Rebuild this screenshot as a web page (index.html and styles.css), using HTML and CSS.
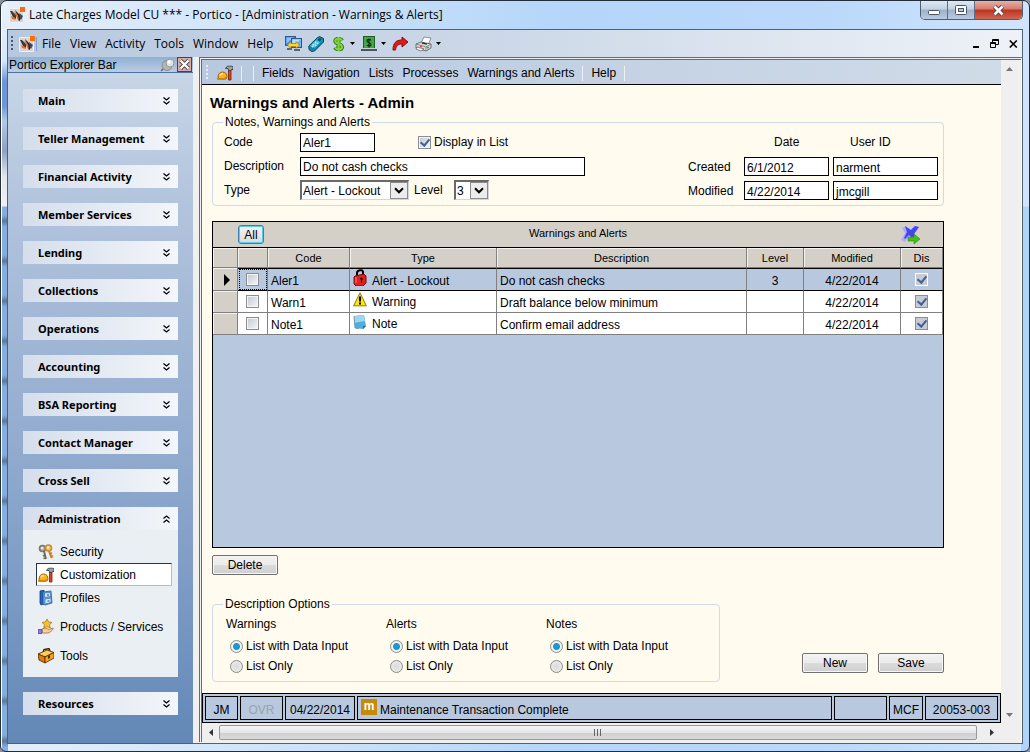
FILE: index.html
```html
<!DOCTYPE html>
<html lang="en">
<head>
    <meta charset="UTF-8">
    <title>Portico - Warnings &amp; Alerts</title>
    <link rel="stylesheet" href="styles.css">
</head>
<body>

<!-- shared icons -->
<svg class="symbols" aria-hidden="true">
    <symbol id="logo" viewBox="0 0 16 16">
        <rect y="1" width="15" height="15" fill="#d6d6d8"/>
        <path d="M.5 1.500h14v14H.500z" fill="none" stroke="#efefef"/>
        <path d="M1 4h2l4 4v4l-3-2z" fill="#3a3a3a"/>
        <path d="M2 9l4 2 1 2-4-1z" fill="#f26a1b"/>
        <path d="M6 3l5 5v6l-2-1-1-5z" fill="#222"/>
        <path d="M5 4l4 4 1 6-3-5z" fill="#f26a1b"/>
        <path d="M10 6l4 3-2 4-1-1z" fill="#3c4a60"/>
        <rect x="11" y="0" width="5" height="5" fill="#ff6a0a"/>
    </symbol>
    <symbol id="hat" viewBox="0 0 16 16">
        <path d="M1 12c0-3 2-5 4.500-5 3 0 4.500 2 4.500 5l-1 2H2z" fill="#fdb515" stroke="#8a4a00" stroke-width=".8"/>
        <path d="M3 10.500c.500-1 1.500-2 3-2" fill="none" stroke="#ffe690" stroke-width="1.400"/>
        <path d="M0 12.500c2 1.500 6 1.500 8-.5l1.500 1c-2 2.500-7 2.500-9.500 1.500z" fill="#d98400"/>
        <path d="M11.500 5H14v10h-2.500z" fill="#e2431e" stroke="#7a1c08" stroke-width=".8"/>
        <path d="M8.500 3.500c1-2 2-2.500 4-2.300h2.500L16 2v3l-1-1-1 1.500h-2.500L11 3.500z" fill="#9da0a5" stroke="#333" stroke-width=".8"/>
    </symbol>
    <symbol id="down" viewBox="0 0 7 8">
        <path d="M.500.500L3.500 3l3-2.500M.500 4.500L3.500 7l3-2.500" fill="none" stroke="#000" stroke-width="1.300"/>
    </symbol>
    <symbol id="up" viewBox="0 0 7 8">
        <path d="M.500 3.500L3.500 1l3 2.500M.500 7.500L3.500 5l3 2.500" fill="none" stroke="#000" stroke-width="1.300"/>
    </symbol>
    <symbol id="caret" viewBox="0 0 5 3">
        <path d="M0 0h5L2.500 3z" fill="#000"/>
    </symbol>
    <symbol id="chevron" viewBox="0 0 10 6">
        <path d="M1 .800l4 4 4-4" fill="none" stroke="#000" stroke-width="2"/>
    </symbol>
</svg>

<div class="window">

    <header class="titlebar">
        <svg class="icon16"><use href="#logo"/></svg>
        <span class="caption">Late Charges Model CU *** - Portico - [Administration - Warnings &amp; Alerts]</span>
        <div class="captionbuttons">
            <button aria-label="Minimize"><svg width="12" height="11"><rect x=".5" y="5.500" width="11" height="4" rx="1" fill="#fff" stroke="#4a5468"/></svg></button>
            <button aria-label="Maximize"><svg width="12" height="11"><rect x=".5" y=".5" width="11" height="9" rx="1" fill="#fff" stroke="#4a5468"/><rect x="3.500" y="3.500" width="5" height="3" fill="#b9c9de" stroke="#4a5468"/></svg></button>
            <button class="close" aria-label="Close"><svg width="13" height="11"><path d="M2.500 1.500l8 8M10.500 1.500l-8 8" stroke="#4d3f4c" stroke-width="4.500"/><path d="M2.500 1.500l8 8M10.500 1.500l-8 8" stroke="#fff" stroke-width="2.600"/></svg></button>
        </div>
    </header>

    <div class="frame">

        <!-- menu bar -->
        <nav class="menubar">
            <span class="grip"></span>
            <svg class="icon16"><use href="#logo"/></svg>
            <span class="logoline"></span>
            <div class="menus">
                <a href="#">File</a>
                <a href="#">View</a>
                <a href="#">Activity</a>
                <a href="#">Tools</a>
                <a href="#">Window</a>
                <a href="#">Help</a>
            </div>
            <div class="tools">
                <button aria-label="Transfer">
                    <svg width="17" height="16">
                        <rect x=".5" y=".5" width="10" height="9" fill="#3f8cf0" stroke="#31558f"/>
                        <path d="M1.500 1.500h7l-7 6z" fill="#8cc4ff"/>
                        <rect x="6.500" y="2.500" width="10" height="9" fill="#6eb2fa" stroke="#31558f"/>
                        <path d="M7.500 3.500h8l-8 6z" fill="#c0e0ff"/>
                        <path d="M2 12h5v2H2zM9 13h6v2H9z" fill="#56648c"/>
                        <path d="M2.500 9L6 5.500v2h5v-2L14.500 9 11 12.500v-2H6v2z" fill="#ffd528" stroke="#9a7a10" stroke-width=".7"/>
                    </svg>
                </button>
                <button aria-label="Calculator">
                    <svg width="17" height="16">
                        <path d="M.800 10L9 2l2.500-1.500 4 2V6L6.500 15l-3 .5-2.500-2z" fill="#1784ab" stroke="#06485f"/>
                        <path d="M2 10l8-8 4.500 2-8 8z" fill="#43bfe0"/>
                        <path d="M9 4l2-2 3 1.500-2 2.300z" fill="#0b556e"/>
                        <path d="M5 8l1 1M7 6l1 1M4 10l1 1M7 10l1-1M9 8l1-1" stroke="#e6fbff" stroke-width="1.500"/>
                    </svg>
                </button>
                <button class="drop currency" aria-label="Currency">
                    <svg width="11" height="16">
                        <path d="M9 4.500C8 2.500 2.500 2 2.300 5c0 3.300 6.700 2.500 6.700 6 0 3-5.500 3-7 .5M5.500 1v14" fill="none" stroke="#2a7a12" stroke-width="4"/>
                        <path d="M9 4.500C8 2.500 2.500 2 2.300 5c0 3.300 6.700 2.500 6.700 6 0 3-5.500 3-7 .5M5.500 1v14" fill="none" stroke="#7ed33c" stroke-width="2.200"/>
                    </svg>
                    <svg class="caret"><use href="#caret"/></svg>
                </button>
                <button class="drop" aria-label="Cash drawer">
                    <svg width="16" height="16">
                        <rect x="2.500" y=".5" width="11" height="12" fill="#48a44a" stroke="#1f5f25"/>
                        <path d="M10 4.500C9 3 6 3 6 5c0 2 4 1.500 4 3.500s-3 2-4 .5M8 2.500v9" fill="none" stroke="#0a2f0c" stroke-width="1.200"/>
                        <path d="M0 13h16v2H0z" fill="#4b5560"/><path d="M1 12.500h14" stroke="#c9d2d8"/>
                    </svg>
                    <svg class="caret"><use href="#caret"/></svg>
                </button>
                <button aria-label="Forward">
                    <svg width="17" height="15">
                        <path d="M1 14C1 7 4 4 10 4V1l6 5-6 5V8C6 8 4 10 3.500 14z" fill="#e01a1a" stroke="#8c0a0a"/>
                    </svg>
                </button>
                <button class="drop" aria-label="Print">
                    <svg width="17" height="16">
                        <path d="M6 7l3-6 7 1-3 7z" fill="#fff" stroke="#777" stroke-width=".8"/>
                        <path d="M1 8l5-2 10 2v4l-5 3-10-3z" fill="#d9d9d9" stroke="#555" stroke-width=".8"/>
                        <path d="M1 8l10 3 5-3M11 11v4" fill="none" stroke="#777" stroke-width=".8"/>
                        <path d="M2 11l7 2-3 2-5-2z" fill="#fff" stroke="#555" stroke-width=".7"/>
                        <path d="M7 7l5 1.200" stroke="#333" stroke-width="1.300"/>
                        <circle cx="13" cy="11.500" r="1" fill="#3aa83a"/>
                        <circle cx="6" cy="10.500" r="1" fill="#d33"/>
                    </svg>
                    <svg class="caret"><use href="#caret"/></svg>
                </button>
            </div>
            <div class="mdibuttons">
                <button aria-label="Minimize form"><svg width="7" height="9"><path d="M0 7h6v2H0z"/></svg></button>
                <button aria-label="Restore form"><svg width="9" height="9"><path d="M2.500 3V.500h6v5H6M2 1.500h7M.500 3.500h5v5h-5zM0 4.500h6" fill="none" stroke="#000"/></svg></button>
                <button aria-label="Close form"><svg width="9" height="8"><path d="M.800.500l7 7M7.800.500l-7 7" stroke="#000" stroke-width="1.600"/></svg></button>
            </div>
        </nav>

        <div class="body">

            <!-- explorer bar -->
            <aside class="explorer">
                <div class="explorerhead">
                    <h2>Portico Explorer Bar</h2>
                    <svg width="15" height="14"><path d="M1 13l4-4" stroke="#666" stroke-width="1.500"/><ellipse cx="7" cy="7.500" rx="5" ry="5" fill="#b4b4b4" stroke="#8c8c8c"/><circle cx="10" cy="5" r="4" fill="#e2e2e2" stroke="#999"/><circle cx="9" cy="4" r="1.500" fill="#fff"/></svg>
                    <button class="paneclose" aria-label="Close explorer bar"><svg width="11" height="11"><path d="M1.500 1.500l8 8M9.500 1.500l-8 8" stroke="#444" stroke-width="4"/><path d="M1.500 1.500l8 8M9.500 1.500l-8 8" stroke="#fff" stroke-width="2.400"/></svg></button>
                </div>
                <div class="groups">
                    <button class="group">Main<svg><use href="#down"/></svg></button>
                    <button class="group">Teller Management<svg><use href="#down"/></svg></button>
                    <button class="group">Financial Activity<svg><use href="#down"/></svg></button>
                    <button class="group">Member Services<svg><use href="#down"/></svg></button>
                    <button class="group">Lending<svg><use href="#down"/></svg></button>
                    <button class="group">Collections<svg><use href="#down"/></svg></button>
                    <button class="group">Operations<svg><use href="#down"/></svg></button>
                    <button class="group">Accounting<svg><use href="#down"/></svg></button>
                    <button class="group">BSA Reporting<svg><use href="#down"/></svg></button>
                    <button class="group">Contact Manager<svg><use href="#down"/></svg></button>
                    <button class="group">Cross Sell<svg><use href="#down"/></svg></button>
                    <div>
                        <button class="group">Administration<svg><use href="#up"/></svg></button>
                        <ul class="items">
                            <li><a href="#">
                                <svg class="icon16" viewBox="0 0 16 16"><circle cx="4.500" cy="4.500" r="3" fill="#b9b4aa" stroke="#7c7466" stroke-width="1.600"/><circle cx="4" cy="4" r="1" fill="#fff"/><path d="M6 7l2 8M7 11l-2 1M7.500 14l-2 .5" stroke="#6b655c" stroke-width="1.800"/><circle cx="10.500" cy="4" r="3" fill="#f5c26b" stroke="#c98a2d" stroke-width="1.600"/><path d="M11 7l2.500 7M12 10l2-1M13 13l2-1" stroke="#c9822a" stroke-width="2"/><circle cx="10" cy="3.500" r="1" fill="#fff"/></svg>
                                Security</a></li>
                            <li class="selected"><a href="#"><svg class="icon16"><use href="#hat"/></svg>Customization</a></li>
                            <li><a href="#">
                                <svg class="icon16" viewBox="0 0 16 16"><path d="M2 1l4-1v14l-3 1-1-2z" fill="#1f68b8" stroke="#0e3f7c" stroke-width=".8"/><path d="M5 2l8-1 1 12-7 2-2-1z" fill="#6aa9e6" stroke="#21599e" stroke-width=".8"/><path d="M6.500 3l6-.5v4l-6 1zM7 9l6-1v4.500l-6 1.500z" fill="#cfe5fa" stroke="#3973b3" stroke-width=".7"/><path d="M9 5h2M9.500 11h2" stroke="#28466e"/></svg>
                                Profiles</a></li>
                            <li class="spaced"><a href="#">
                                <svg class="icon16" viewBox="0 0 16 16"><path d="M9 0l1.600 3 3.400.400-2.500 2.300.8 3.300L9 7.500 5.800 9l.7-3.300L4 3.400 7.400 3z" fill="#f5c32c" stroke="#a9781a" stroke-width=".8"/><path d="M4 10l3-1 4 1.500 4-1.500c1 1-2 4-5 5H5l-1-1z" fill="#f8cf97" stroke="#a86a2c" stroke-width=".8"/><path d="M0 10.500h4v4H0z" fill="#8a78e8" stroke="#5345a8" stroke-width=".8"/></svg>
                                Products / Services</a></li>
                            <li class="spaced"><a href="#">
                                <svg class="icon16" viewBox="0 0 16 16"><path d="M5 4l1-2.500 5-1 1 2.500" fill="none" stroke="#3a1e00" stroke-width="1.300"/><path d="M0 6l9-4 7 2.500L7 9z" fill="#ffcf4a" stroke="#5a3000" stroke-width=".9"/><path d="M0 6l7 3v6l-6-3z" fill="#e07c10" stroke="#5a3000" stroke-width=".9"/><path d="M7 9l9-4.500V10l-9 5z" fill="#f8a51d" stroke="#5a3000" stroke-width=".9"/><path d="M10 8l2-1v3l-2 1z" fill="#5a3000"/></svg>
                                Tools</a></li>
                        </ul>
                    </div>
                    <button class="group">Resources<svg><use href="#down"/></svg></button>
                </div>
            </aside>

            <!-- admin form -->
            <div class="mdi">
                <div class="client">
                    <nav class="formbar">
                        <span class="grip light"></span>
                        <svg class="icon16"><use href="#hat"/></svg>
                        <span class="sep"></span>
                        <span class="sep"></span>
                        <div class="formlinks">
                            <a href="#">Fields</a>
                            <a href="#">Navigation</a>
                            <a href="#">Lists</a>
                            <a href="#">Processes</a>
                            <a href="#">Warnings and Alerts</a>
                        </div>
                        <span class="sep"></span>
                        <a href="#">Help</a>
                        <span class="sep"></span>
                    </nav>

                    <main class="content">
                        <h1>Warnings and Alerts - Admin</h1>

                        <fieldset class="details">
                            <legend>Notes, Warnings and Alerts</legend>
                            <div class="fields">
                                <div class="row">
                                    <label class="name" for="code">Code</label>
                                    <input class="short" id="code" value="Aler1">
                                    <input type="checkbox" class="check display" id="display" checked>
                                    <label for="display">Display in List</label>
                                </div>
                                <div class="row">
                                    <label class="name" for="description">Description</label>
                                    <input class="long" id="description" value="Do not cash checks">
                                </div>
                                <div class="row">
                                    <label class="name" for="type">Type</label>
                                    <span class="combo wide"><select id="type"><option>Alert - Lockout</option><option>Warning</option><option>Note</option></select><svg><use href="#chevron"/></svg></span>
                                    <label class="levelname" for="level">Level</label>
                                    <span class="combo"><select id="level"><option>3</option><option>2</option><option>1</option></select><svg><use href="#chevron"/></svg></span>
                                </div>
                            </div>
                            <div class="audit">
                                <span></span>
                                <span class="audithead">Date</span>
                                <span class="audithead">User ID</span>
                                <label for="created">Created</label>
                                <input id="created" value="6/1/2012">
                                <input aria-label="Created by" value="narment">
                                <label for="modified">Modified</label>
                                <input id="modified" value="4/22/2014">
                                <input aria-label="Modified by" value="jmcgill">
                            </div>
                        </fieldset>

                        <section class="grid">
                            <div class="gridtitle">
                                <button class="all">All</button>
                                <span>Warnings and Alerts</span>
                                <button class="export" aria-label="Export">
                                    <svg width="19" height="18">
                                        <path d="M1 2l4-2 4 5 4-5 5 1-5 7 3 5-4 1-4-4-4 6-4-2 4-7z" fill="#a9adff"/>
                                        <path d="M4 0l6 4 4-4 4 1-5 7 3 5-5-1-3-3-4 4-1-1 3-6z" fill="#4644f2"/>
                                        <path d="M7 11h6V8l6 5-6 5v-3H7z" fill="#46bd1c" stroke="#2b8a10" stroke-width=".6"/>
                                    </svg>
                                </button>
                            </div>
                            <table>
                                <colgroup>
                                    <col class="c-mark"><col class="c-check"><col class="c-code"><col class="c-type"><col><col class="c-level"><col class="c-mod"><col class="c-dis">
                                </colgroup>
                                <thead>
                                    <tr><th></th><th></th><th>Code</th><th>Type</th><th>Description</th><th>Level</th><th>Modified</th><th>Dis</th></tr>
                                </thead>
                                <tbody>
                                    <tr class="current">
                                        <th><svg width="6" height="12"><path d="M0 0l6 6-6 6z"/></svg></th>
                                        <td class="pick"><input type="checkbox" class="check" aria-label="Select Aler1"></td>
                                        <td>Aler1</td>
                                        <td class="type"><svg width="14" height="17"><path d="M4 7V4c0-3 6-4 6-1v3" fill="none" stroke="#000" stroke-width="2"/><path d="M2 7l9-2 2 2v7l-3 3H3l-2-2V8z" fill="#df2020" stroke="#7a0a0a"/><path d="M3 8v6" stroke="#ff8080"/><path d="M7 9.500l1.500-1L10 10l-1 1v3H8v-3z"/></svg>Alert - Lockout</td>
                                        <td>Do not cash checks</td>
                                        <td class="mid">3</td>
                                        <td class="mid">4/22/2014</td>
                                        <td class="dis"><input type="checkbox" class="check grey" aria-label="Display Aler1" checked></td>
                                    </tr>
                                    <tr>
                                        <th></th>
                                        <td class="pick"><input type="checkbox" class="check" aria-label="Select Warn1"></td>
                                        <td>Warn1</td>
                                        <td class="type"><svg width="14" height="15"><path d="M7 .800l6.400 13H.600z" fill="#ffe800" stroke="#8c7c00"/><path d="M7 4.500v5" stroke="#000" stroke-width="2"/><rect x="6" y="10.500" width="2" height="2"/></svg>Warning</td>
                                        <td>Draft balance below minimum</td>
                                        <td class="mid"></td>
                                        <td class="mid">4/22/2014</td>
                                        <td class="dis"><input type="checkbox" class="check grey" aria-label="Display Warn1" checked></td>
                                    </tr>
                                    <tr>
                                        <th></th>
                                        <td class="pick"><input type="checkbox" class="check" aria-label="Select Note1"></td>
                                        <td>Note1</td>
                                        <td class="type"><svg width="14" height="15"><path d="M1 2l10-1 2 11-3 3-8-1z" fill="#4eaede"/><path d="M1 2l10-1 1 6-11 2z" fill="#9bd6f2"/><path d="M13 12l-3 3v-3z" fill="#1d6c9c"/><path d="M1 2l1 12 4 .5" fill="none" stroke="#7a98a8"/></svg>Note</td>
                                        <td>Confirm email address</td>
                                        <td class="mid"></td>
                                        <td class="mid">4/22/2014</td>
                                        <td class="dis"><input type="checkbox" class="check grey" aria-label="Display Note1" checked></td>
                                    </tr>
                                </tbody>
                            </table>
                        </section>

                        <button class="btn delete">Delete</button>

                        <div class="bottom">
                            <fieldset class="options">
                                <legend>Description Options</legend>
                                <div class="option">
                                    <h3>Warnings</h3>
                                    <label><input type="radio" name="warnings" checked>List with Data Input</label>
                                    <label><input type="radio" name="warnings">List Only</label>
                                </div>
                                <div class="option">
                                    <h3>Alerts</h3>
                                    <label><input type="radio" name="alerts" checked>List with Data Input</label>
                                    <label><input type="radio" name="alerts">List Only</label>
                                </div>
                                <div class="option">
                                    <h3>Notes</h3>
                                    <label><input type="radio" name="notes" checked>List with Data Input</label>
                                    <label><input type="radio" name="notes">List Only</label>
                                </div>
                            </fieldset>
                            <div class="actions">
                                <button class="btn">New</button>
                                <button class="btn">Save</button>
                            </div>
                        </div>
                    </main>

                    <footer class="status">
                        <span class="s-user">JM</span>
                        <span class="s-ovr">OVR</span>
                        <span class="s-date">04/22/2014</span>
                        <span class="message"><b>m</b>Maintenance Transaction Complete</span>
                        <span class="s-blank"></span>
                        <span class="s-mcf">MCF</span>
                        <span class="s-id">20053-003</span>
                    </footer>
                </div>

                <div class="vscroll">
                    <button aria-label="Scroll up"><svg width="7" height="4"><path d="M3.500 0L7 4H0z" fill="#777"/></svg></button>
                    <button aria-label="Scroll down"><svg width="7" height="4"><path d="M0 0h7L3.500 4z" fill="#777"/></svg></button>
                </div>

                <div class="hscroll">
                    <button aria-label="Scroll left"><svg width="4" height="7"><path d="M4 0v7L0 3.500z" fill="#333"/></svg></button>
                    <span class="thumb"><svg width="8" height="7"><path d="M.500 0v7M3.500 0v7M6.500 0v7" stroke="#666"/></svg></span>
                    <button aria-label="Scroll right"><svg width="4" height="7"><path d="M0 0v7l4-3.500z" fill="#333"/></svg></button>
                </div>
            </div>
        </div>
    </div>
</div>

</body>
</html>
```
FILE: styles.css
```css
* {
    box-sizing: border-box;
}

body {
    margin: 0;
    background: #8b9199;
    color: #000;
    font: 12px/16px "Liberation Sans", Arial, sans-serif;
}

a {
    color: inherit;
    text-decoration: none;
}

button,
input,
select {
    margin: 0;
    padding: 0;
    border: 0;
    border-radius: 0;
    background: none;
    color: inherit;
    font: inherit;
}

svg {
    flex: none;
}

.symbols {
    display: none;
}

.icon16 {
    width: 16px;
    height: 16px;
}

/* window frame */
.window {
    display: flex;
    flex-direction: column;
    min-height: 100vh;
    padding: 0 6px 7px;
    border: 1px solid #252d3a;
    border-radius: 7px 7px 6px 6px;
    background:
        linear-gradient(90deg, #fff 1px, transparent 1px),
        linear-gradient(#e9f3fd, #d4e6fa 60px, #6f96d4 80px, #6f96d4 105px, #b4cae4 120px, #8ea0c4 150px, #dfe7ee 175px, #eef0f2 205px, transparent 206px) 0 0 / 7px 100% no-repeat,
        repeating-linear-gradient(#86aedd 0 14px, #5c7795 20px, #86aedd 26px 40px) 0 0 / 7px 100% no-repeat,
        linear-gradient(transparent 205px, #b0d3f8 206px) right / 8px 100% no-repeat,
        linear-gradient(90deg, #e4effb, #cde2f8 30%, #b4d6fa 55%, #bad8fa 80%, #d0e5fc);
}

.titlebar {
    display: flex;
    align-items: center;
    height: 28px;
    padding-left: 2px;
    font: 12px/16px "Open Sans", "Segoe UI", sans-serif;
}

.caption {
    padding-left: 4px;
}

.captionbuttons {
    display: flex;
    align-self: flex-start;
    margin-left: auto;
    border: 1px solid #4f5d70;
    border-top: 0;
    border-radius: 0 0 5px 5px;
    overflow: hidden;
}

.captionbuttons button {
    width: 27px;
    height: 18px;
    border-right: 1px solid #5f6e83;
    background: linear-gradient(#dfe8f2, #c3d1e2 45%, #9fb1c9 50%, #b9cbe0);
    line-height: 0;
}

.captionbuttons .close {
    width: 47px;
    border-right: 0;
    background: linear-gradient(#e8b0a4, #d37c6c 45%, #bb3420 50%, #cf6550);
}

.frame {
    display: flex;
    flex: 1;
    flex-direction: column;
    border: 1px solid #52616f;
    background: #f0f0f0;
}

/* menu bar */
.menubar {
    display: flex;
    align-items: center;
    height: 27px;
    padding: 0 4px 0 3px;
    background: linear-gradient(90deg, #b7c8df, #cdd9e8 50%, #eef2f8);
    font: 12px/16px "Open Sans", "Segoe UI", sans-serif;
}

.grip {
    width: 2px;
    height: 16px;
    margin-right: 6px;
    background: repeating-linear-gradient(#46587c 0 2px, transparent 2px 4px);
}

.logoline {
    width: 1px;
    height: 14px;
    margin-left: 1px;
    background: #7da2d6;
}

.menus {
    display: flex;
    gap: 9px;
    padding-left: 5px;
}

.tools {
    display: flex;
    align-items: center;
    gap: 6px;
    padding-left: 12px;
}

.tools button {
    display: flex;
    align-items: center;
}

.tools .drop {
    gap: 4px;
}

.tools .currency {
    gap: 6px;
    padding-left: 2px;
}

.caret {
    width: 5px;
    height: 3px;
}

.mdibuttons {
    display: flex;
    gap: 10px;
    margin-left: auto;
}

.mdibuttons button {
    display: flex;
    align-items: center;
}

.body {
    display: flex;
    flex: 1;
}

/* explorer bar */
.explorer {
    width: 185px;
    background: linear-gradient(#cad8e7, #b4c5de 20%, #8aa5cb 65%, #6388b7);
}

.explorerhead {
    display: flex;
    align-items: center;
    height: 16px;
    border-bottom: 1px solid #4c72a8;
    background: linear-gradient(#8fb0d4, #bccde2);
}

.explorerhead h2 {
    flex: 1;
    margin: 0;
    padding-left: 1px;
    font-size: 12px;
    font-weight: normal;
}

.paneclose {
    display: flex;
    align-items: center;
    justify-content: center;
    width: 15px;
    height: 15px;
    margin: 0 1px 0 2px;
    border: 1px solid #7a2f2f;
    background: #d9a9a6;
}

.groups {
    display: flex;
    flex-direction: column;
    gap: 15px;
    padding: 16px 15px;
}

.group {
    display: flex;
    align-items: center;
    justify-content: space-between;
    width: 100%;
    height: 23px;
    padding: 0 8px 0 15px;
    background: linear-gradient(90deg, #d5deeb, #f3f6fa);
    font: bold 11px/16px "Noto Sans", Tahoma, sans-serif;
}

.group svg {
    width: 7px;
    height: 8px;
}

.items {
    height: 147px;
    margin: 0;
    padding: 10px 6px 0 13px;
    background: #eaeff3;
    list-style: none;
}

.items li {
    height: 23px;
    border: 1px solid transparent;
}

.items .spaced {
    margin-top: 6px;
}

.items .selected {
    border-color: #26344c #a9bddc #a9bddc #26344c;
    background: #fff;
}

.items a {
    display: flex;
    align-items: center;
    gap: 6px;
    height: 100%;
    padding-left: 1px;
    white-space: nowrap;
}

/* child form */
.mdi {
    display: grid;
    flex: 1;
    grid-template: 1fr 19px / 1fr 20px;
    margin: 0 0 1px 6px;
    border: 3px double #6a6a6a;
    border-width: 3px 1px 0 3px;
    border-right-color: #fff;
}

.client {
    display: flex;
    flex-direction: column;
    background: #fffbef;
}

.formbar {
    display: flex;
    align-items: center;
    height: 25px;
    padding: 2px 0 0 4px;
    border-bottom: 1px solid #000;
    background: linear-gradient(90deg, #b7c8df, #d0dbe8);
}

.grip.light {
    margin-right: 9px;
    background: repeating-linear-gradient(#e8eef6 0 2px, transparent 2px 4px);
}

.sep {
    width: 1px;
    height: 15px;
    margin: 0 8px;
    background: #eef2f7;
}

.sep + .sep {
    margin-left: 3px;
}

.formlinks {
    display: flex;
    gap: 9px;
}

.content {
    flex: 1;
    padding: 9px 57px 0 10px;
}

h1 {
    margin: 0 0 0 -2px;
    font-size: 15px;
    line-height: 18px;
}

fieldset {
    display: flex;
    min-width: 0;
    margin: 0;
    border: 1px solid #cddae9;
    border-radius: 4px;
}

legend {
    padding: 0 2px;
}

.details {
    justify-content: space-between;
    margin-top: 2px;
    padding: 2px 5px 5px 11px;
}

.details legend {
    margin-left: -1px;
}

.fields {
    display: flex;
    flex-direction: column;
    gap: 4px;
}

.row {
    display: flex;
    align-items: center;
    height: 20px;
}

.name {
    width: 76px;
}

.fields input:not([type]),
.audit input {
    height: 19px;
    padding: 2px 2px 0;
    border: 1px solid #000;
    background: #fff;
}

.short {
    width: 75px;
}

.long {
    width: 285px;
}

.check {
    display: grid;
    place-items: center;
    width: 13px;
    height: 13px;
    border: 1px solid #8a8d91;
    background: linear-gradient(135deg, #c6ccd4, #f2f4f6) content-box, #f4f4f4;
    padding: 1px;
    appearance: none;
}

.check:checked::before {
    content: "";
    width: 4px;
    height: 7px;
    margin-top: -2px;
    border: solid #40619c;
    border-width: 0 2px 2px 0;
    transform: rotate(40deg);
}

.display {
    margin: 0 3px 0 43px;
}

.combo {
    display: grid;
    grid-template-columns: 1fr 18px;
    align-items: center;
    justify-items: center;
    width: 35px;
    height: 20px;
    border: 1px solid #d6d6d6;
    border-color: #696969 #d6d6d6 #d6d6d6 #696969;
    border-width: 2px 1px 1px 2px;
    background: #fff;
}

.combo.wide {
    width: 109px;
}

.combo select {
    grid-area: 1 / 1 / 2 / 3;
    width: 100%;
    height: 17px;
    padding-left: 1px;
    appearance: none;
}

.combo svg {
    grid-area: 1 / 2;
    width: 18px;
    height: 17px;
    padding: 4px 3px;
    border: 1px solid #8b8b8b;
    background: #ececec;
    pointer-events: none;
}

.levelname {
    width: 45px;
    padding-left: 5px;
}

.audit {
    display: grid;
    grid-template: 20px 19px 19px / 52px 85px 105px;
    align-items: center;
    gap: 5px 4px;
}

.audithead {
    padding-left: 17px;
}

.audit .audithead:nth-child(2) {
    padding-left: 30px;
}

/* alerts grid */
.grid {
    height: 327px;
    margin-top: 15px;
    border: 1px solid #000;
    background: #b8c8df;
}

.gridtitle {
    display: grid;
    grid-template-columns: 60px 1fr 60px;
    align-items: center;
    height: 26px;
    border-bottom: 1px solid #000;
    background: #d4d0c8;
    font-size: 11px;
    text-align: center;
}

.gridtitle span {
    padding-bottom: 4px;
}

.all {
    width: 26px;
    height: 19px;
    margin-left: 25px;
    border: 1px solid #3c7fb1;
    border-radius: 3px;
    background: linear-gradient(#f4f4f4, #d8dcdf);
    box-shadow: inset 0 0 0 1px #56cdf0;
    font-size: 12px;
}

.export {
    width: 19px;
    margin-left: 18px;
    line-height: 0;
}

table {
    width: 100%;
    border-collapse: separate;
    border-spacing: 0;
    table-layout: fixed;
}

.c-mark { width: 25px; }
.c-check { width: 30px; }
.c-code { width: 82px; }
.c-type { width: 147px; }
.c-level { width: 57px; }
.c-mod { width: 97px; }
.c-dis { width: 42px; }

th {
    height: 20px;
    padding: 0;
    border: 1px solid #808080;
    border-width: 0 1px 1px 0;
    background: #d4d0c8;
    box-shadow: inset 1px 1px #f4f2ee;
    font-size: 11px;
    font-weight: normal;
}

th svg {
    display: block;
    margin: 1px auto 0 11px;
}

td {
    height: 22px;
    padding: 4px 3px 0;
    border: 1px solid #808080;
    border-width: 0 1px 1px 0;
    background: #fff;
    line-height: 17px;
    white-space: nowrap;
}

.current td {
    height: 23px;
    border-top: 1px solid #000;
    border-bottom-color: #000;
    background: #b8c8df;
}

.current .pick {
    outline: 1px dotted #000;
    outline-offset: -2px;
}

.pick,
.dis {
    padding: 0;
}

.pick .check,
.dis .check {
    margin: 0 auto;
}

.grey {
    background: #c9cbd3;
}

.current .grey {
    border-color: #fff;
}

.mid {
    text-align: center;
}

.type {
    padding-top: 0;
}

.type svg {
    margin-right: 5px;
    vertical-align: -1px;
}

/* buttons */
.btn {
    width: 66px;
    height: 20px;
    border: 1px solid #707070;
    border-radius: 2px;
    background: linear-gradient(#f2f2f2, #ebebeb 50%, #dcdcdc 50%, #cfcfcf);
    box-shadow: inset 0 0 0 1px #f6f6f6;
}

.delete {
    display: block;
    margin-top: 7px;
}

.bottom {
    display: flex;
    align-items: flex-end;
    justify-content: space-between;
    margin-top: 21px;
}

.options {
    width: 508px;
    height: 86px;
    padding: 4px 0 0 13px;
}

.options legend {
    margin-left: -3px;
}

.option {
    width: 160px;
}

.option h3 {
    margin: 0 0 4px;
    font-size: 12px;
    font-weight: normal;
}

.option label {
    display: flex;
    align-items: center;
    height: 20px;
    padding-left: 4px;
}

.option input {
    width: 13px;
    height: 13px;
    margin-right: 3px;
    border: 1px solid #8a8a8a;
    border-radius: 50%;
    background: radial-gradient(#dadada, #f0f0f0);
    appearance: none;
}

.option input:checked {
    background: radial-gradient(#1e96d4 3px, #f2f2f2 4px);
}

.actions {
    display: flex;
    gap: 10px;
    padding-bottom: 9px;
}

/* status bar */
.status {
    display: flex;
    gap: 2px;
    height: 30px;
    padding: 2px;
    border: 1px solid #000;
    background: #b8c8df;
}

.status span {
    display: flex;
    align-items: center;
    justify-content: center;
    border: 1px solid #000;
    padding-top: 4px;
}

.s-user { width: 33px; }
.s-ovr { width: 43px; color: #9aa3b0; }
.s-date { width: 70px; }
.s-blank { width: 53px; }
.s-mcf { width: 34px; }
.s-id { width: 73px; }

.status .message {
    flex: 1;
    gap: 3px;
    justify-content: flex-start;
    padding-left: 3px;
}

.message b {
    align-self: flex-start;
    width: 16px;
    height: 16px;
    margin-top: -2px;
    background: #c58a08;
    color: #fff;
    line-height: 14px;
    text-align: center;
}

/* scrollbars */
.vscroll,
.hscroll {
    display: flex;
    justify-content: space-between;
    background: #efefef;
}

.vscroll {
    flex-direction: column;
    margin-right: 3px;
}

.vscroll button,
.hscroll button {
    display: flex;
    align-items: center;
    justify-content: center;
    width: 17px;
    height: 17px;
}

.hscroll {
    grid-column: 1 / 3;
    align-items: center;
    padding-right: 21px;
}

.thumb {
    display: flex;
    flex: 1;
    align-items: center;
    justify-content: center;
    height: 15px;
    margin-right: 6px;
    border: 1px solid #999;
    border-radius: 2px;
    background: linear-gradient(#f5f5f5, #e6e6e6 50%, #cfcfcf 50%, #dadada);
}
```
